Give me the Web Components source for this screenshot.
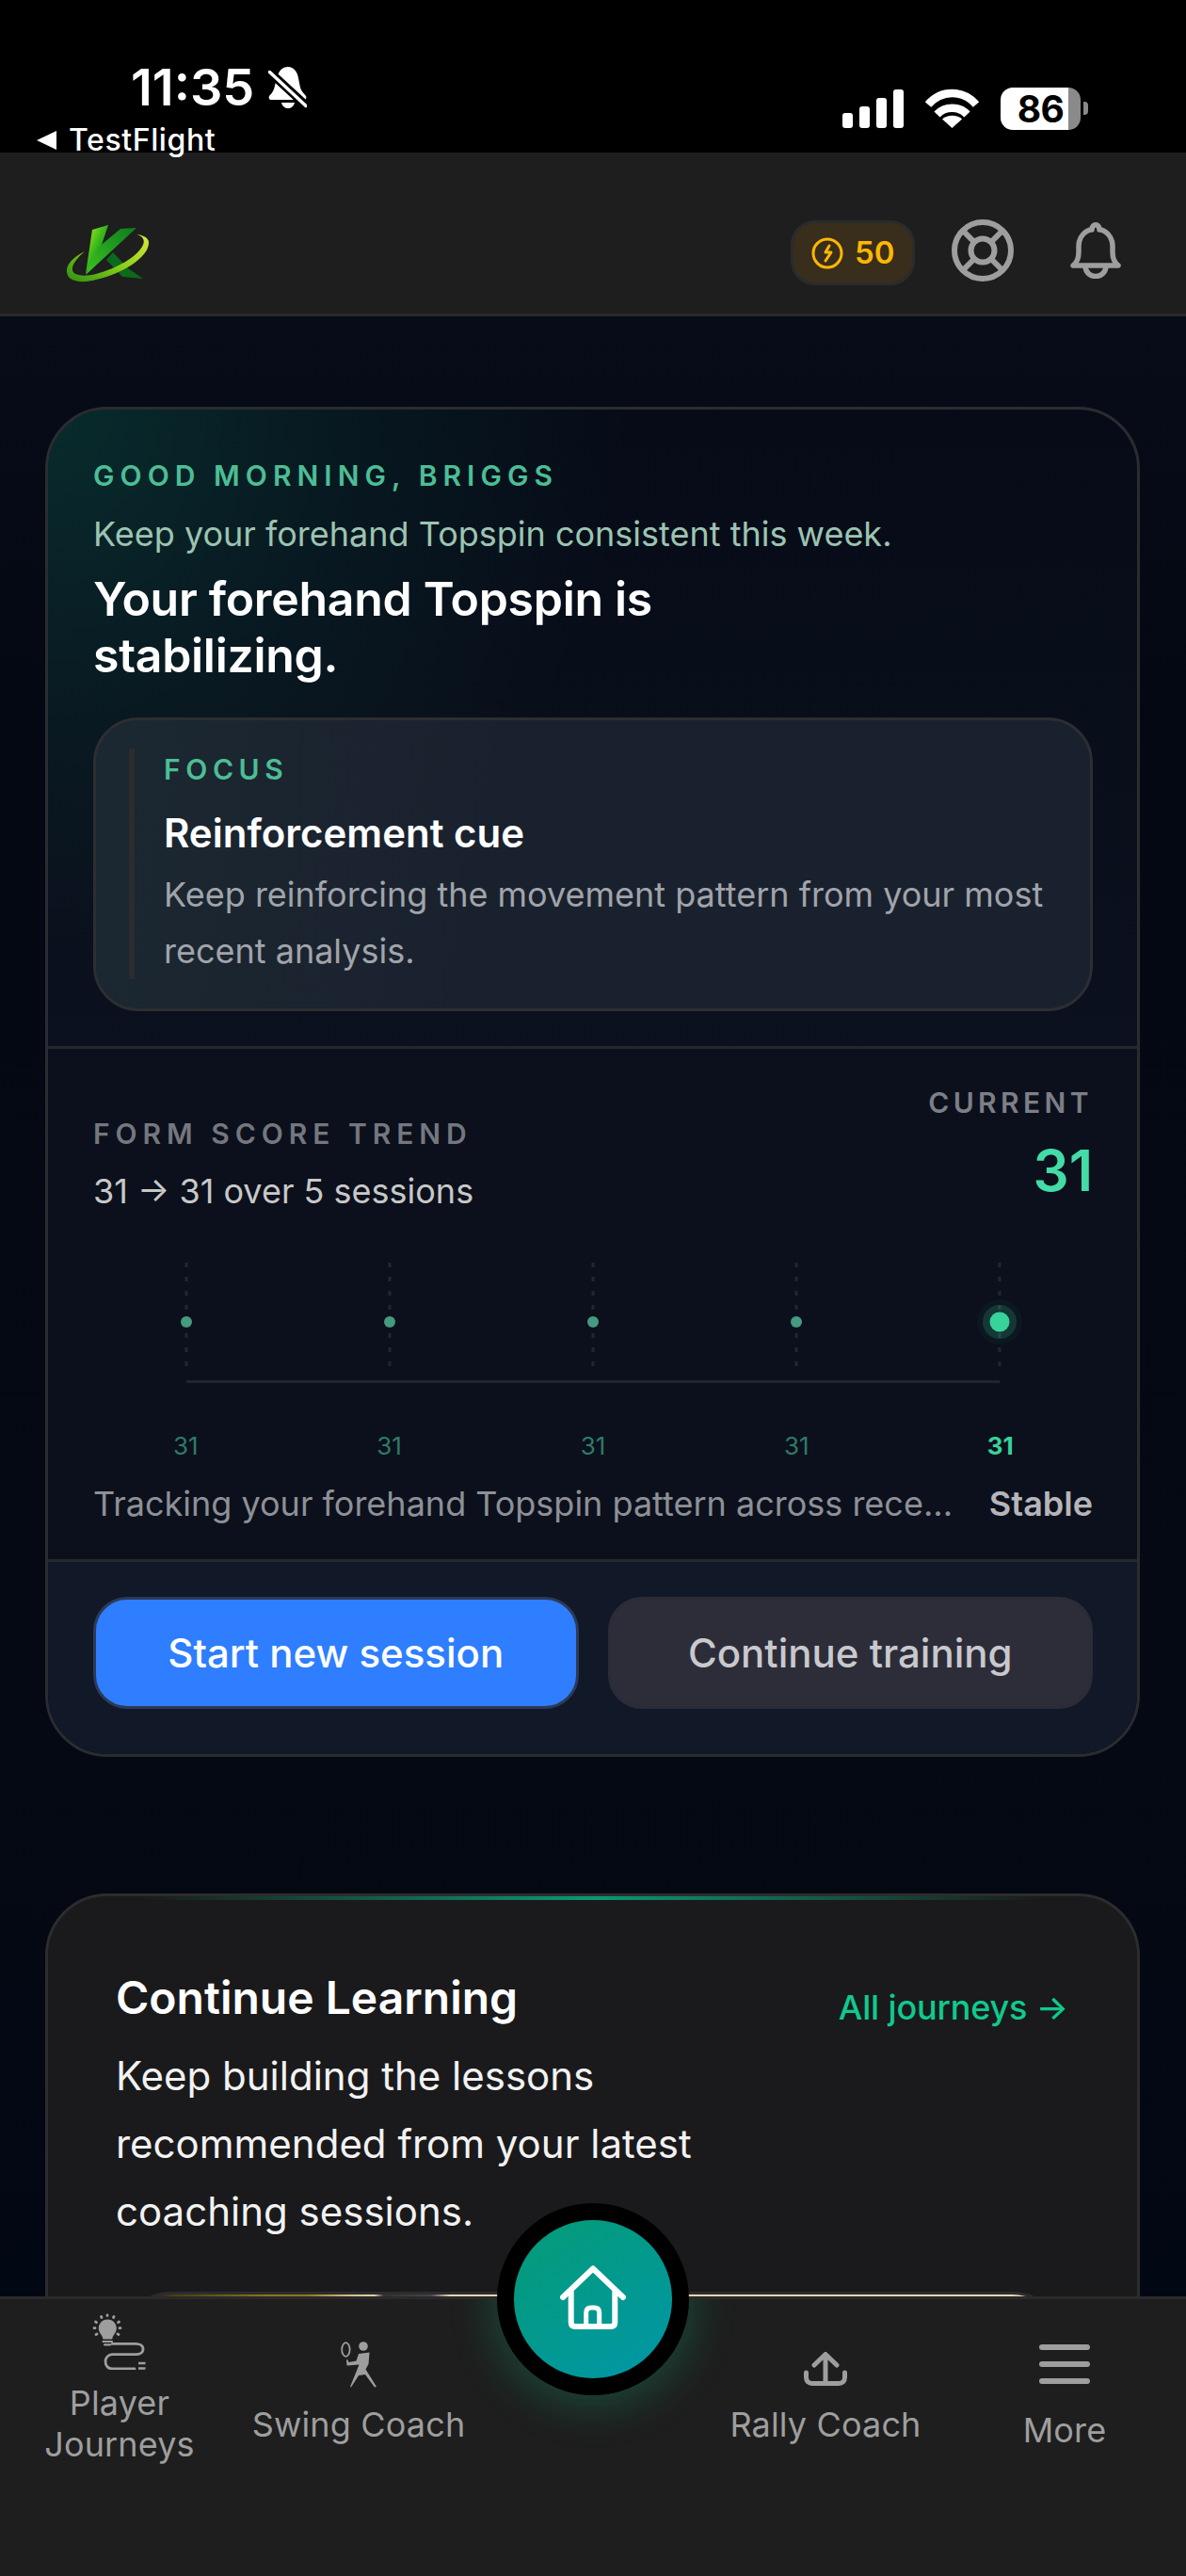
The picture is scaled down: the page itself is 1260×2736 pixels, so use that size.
<!DOCTYPE html>
<html lang="en">
<head>
<meta charset="UTF-8">
<title>Home</title>
<style>
  html, body { margin: 0; background: #050a15; }
  body { font-family: Inter, "Noto Sans", sans-serif; }
  app-shell { height: 2736px; }
</style>
</head>
<body>
<app-shell>
  <status-bar></status-bar>
  <top-header></top-header>
  <main-scroll>
    <hero-card>
      <span slot="eyebrow">GOOD MORNING, BRIGGS</span>
      <span slot="sub">Keep your forehand Topspin consistent this week.</span>
      <span slot="title">Your forehand Topspin is stabilizing.</span>
      <focus-box></focus-box>
      <trend-panel slot="trend"></trend-panel>
    </hero-card>
    <learning-card></learning-card>
  </main-scroll>
  <bottom-nav></bottom-nav>
</app-shell>

<script>
  // 전체 세로 레이아웃
  class AppShell extends HTMLElement {
    constructor() {
      super();
      this.attachShadow({ mode: 'open' }).innerHTML = `
        <style>
          :host { display: flex; flex-direction: column; width: 1260px; overflow: hidden; position: relative; }
        </style>
        <slot></slot>`;
    }
  }

  // 상태 표시줄
  class StatusBar extends HTMLElement {
    constructor() {
      super();
      this.attachShadow({ mode: 'open' }).innerHTML = `
        <style>
          :host { display: flex; justify-content: space-between; height: 162px; flex: none; background: #000; color: #fff; position: relative; z-index: 2; }
          .left { padding: 67px 0 0 38px; }
          .time-row { display: flex; align-items: center; gap: 15px; padding-left: 101px; height: 52px; font: 600 54px/52px Inter, sans-serif; }
          .back { display: flex; align-items: center; gap: 13px; margin-top: 12px; font: 500 32px/36px Inter, sans-serif; letter-spacing: 0.6px; }
          .right { display: flex; align-items: center; gap: 23px; padding: 92px 104px 0 0; height: 46px; }
          .battery { position: relative; width: 85px; height: 45px; border-radius: 13px; background: linear-gradient(90deg, #fff 85%, #8a8a8a 85%); color: #000; font: 700 39px/45px Inter, sans-serif; text-align: center; letter-spacing: -0.5px; }
          .battery::after { content: ""; position: absolute; left: 88px; top: 15px; width: 5px; height: 14px; border-radius: 0 4px 4px 0; background: #8a8a8a; }
          .bat-wrap { width: 93px; }
        </style>
        <div class="left">
          <div class="time-row">
            <span>11:35</span>
            <svg width="41" height="45" viewBox="0 0 41 45" fill="#fff">
              <path d="M21 0c6 0 10 5 11 12l2 10c1 4 4 6 6 9 1 2 0 4-2 4H3c-2 0-3-2-2-4 3-3 5-6 6-11l2-8c2-8 6-12 12-12z"/>
              <path d="M14 38h14c-1 4-4 6-7 6s-6-2-7-6z"/>
              <path d="M1 5 41 42" stroke="#000" stroke-width="9"/>
              <path d="M1.500 5.500 40 41.500" stroke="#fff" stroke-width="3.500" stroke-linecap="round"/>
            </svg>
          </div>
          <div class="back">
            <svg width="22" height="22" viewBox="0 0 22 22" fill="#fff"><path d="M22 1v20L1 11z"/></svg>
            <span>TestFlight</span>
          </div>
        </div>
        <div class="right">
          <svg width="65" height="41" viewBox="0 0 65 41" fill="#fff">
            <rect x="0" y="25" width="11" height="16" rx="3"/>
            <rect x="18" y="18" width="11" height="23" rx="3"/>
            <rect x="36" y="9" width="11" height="32" rx="3"/>
            <rect x="54" y="0" width="11" height="41" rx="3"/>
          </svg>
          <svg width="57" height="42" viewBox="0 0 57 42" fill="none" stroke="#fff" stroke-width="8.500">
            <path d="M3 17C17 1 40 1 54 17"/>
            <path d="M12.500 27.500C21 18.500 36 18.500 44.500 27.500"/>
            <path d="M28.500 42 18 32.500C24 27.500 33 27.500 39 32.500z" fill="#fff" stroke="none"/>
          </svg>
          <div class="bat-wrap"><div class="battery">86</div></div>
        </div>`;
    }
  }

  // 상단 헤더
  class TopHeader extends HTMLElement {
    constructor() {
      super();
      this.attachShadow({ mode: 'open' }).innerHTML = `
        <style>
          :host { display: flex; align-items: center; justify-content: space-between; flex: none; box-sizing: content-box; height: 135px; padding: 36px 69px 0 40px; background: #1e1e1e; border-bottom: 3px solid #2a2a2a; }
          .actions { display: flex; align-items: center; }
          .coins { display: flex; align-items: center; gap: 12px; box-sizing: border-box; width: 132px; height: 69px; margin: 6px 39px 0 0; padding-left: 19px; border: 3px solid #2b2b2b; border-radius: 26px; background: #392d1c; color: #ffb800; font: 600 33px/1 Inter, sans-serif; }
          .bell { margin-left: 60px; }
          svg { display: block; }
        </style>
        <svg width="160" height="110" viewBox="0 0 160 110">
          <defs>
            <linearGradient id="st" x1="0" y1="0" x2="1" y2="1"><stop offset="0" stop-color="#c4e822"/><stop offset=".45" stop-color="#37b81c"/><stop offset="1" stop-color="#0b6a18"/></linearGradient>
            <linearGradient id="ar" x1="1" y1="0" x2="0" y2="1"><stop offset="0" stop-color="#0e7a1e"/><stop offset="1" stop-color="#3cc722"/></linearGradient>
            <linearGradient id="sw" x1="0" y1="1" x2="1" y2="0"><stop offset="0" stop-color="#2d8d12"/><stop offset=".5" stop-color="#8bcf1a"/><stop offset="1" stop-color="#d7e83c"/></linearGradient>
          </defs>
          <path d="M73 65 80 57 96 74 112 85 90 83z" fill="#0c6a1b"/>
          <path d="M58 33 75 28 66 55 51 80z" fill="url(#st)"/>
          <path d="M64 52 88 32 105 31 51 81z" fill="url(#ar)"/>
          <path d="M50 56C38 62 30 70 31 78 32 89 48 90 62 86 90 80 118 62 118 47 118 41 112 39 105 38 112 40 114 44 112 49 106 62 84 74 62 80 50 83 38 82 37 76 36 70 42 63 50 56z" fill="url(#sw)"/>
        </svg>
        <div class="actions">
          <div class="coins">
            <svg width="34" height="34" viewBox="0 0 34 34" fill="none" stroke="#ffb800" stroke-width="3" stroke-linecap="round" stroke-linejoin="round">
              <circle cx="17" cy="17" r="15"/>
              <path d="M19 9 15 16H21L15 25"/>
            </svg>
            <span>50</span>
          </div>
          <svg width="66" height="66" viewBox="0 0 66 66" fill="none" stroke="#9e9e9e" stroke-width="6">
            <circle cx="33" cy="33" r="30"/>
            <circle cx="33" cy="33" r="12.500"/>
            <path d="M12 12 24 24M54 12 42 24M12 54 24 42M54 54 42 42"/>
          </svg>
          <svg class="bell" width="54" height="60" viewBox="0 0 54 60" fill="none" stroke="#9e9e9e" stroke-width="5.500" stroke-linecap="round" stroke-linejoin="round">
            <path d="M3 46C7 43 9 38 9 32V25C9 15 17 8 23 8 23 1 31 1 31 8 37 8 45 15 45 25V32C45 38 47 43 51 46z"/>
            <path d="M16 47C17 61 37 61 38 47"/>
          </svg>
        </div>`;
    }
  }

  // 스크롤 영역
  class MainScroll extends HTMLElement {
    constructor() {
      super();
      this.attachShadow({ mode: 'open' }).innerHTML = `
        <style>
          :host { display: flex; flex-direction: column; gap: 145px; flex: none; height: 2103px; overflow: hidden; box-sizing: border-box; padding: 96px 49px 0 48px; background: linear-gradient(180deg, #070c18 0, #040813 400px, #050913 1500px, #020714 100%); }
        </style>
        <slot></slot>`;
    }
  }

  class HeroCard extends HTMLElement {
    constructor() {
      super();
      this.attachShadow({ mode: 'open' }).innerHTML = `
        <style>
          :host { display: block; flex: none; border: 3px solid #2b2c30; border-radius: 66px; overflow: hidden; background: linear-gradient(180deg, #060b17, #0b111e 50%); color: #fff; position: relative; }
          .top { padding: 50px 47px 37px 48px; background: radial-gradient(ellipse 620px 600px at 0 0, rgba(16, 160, 120, .22), rgba(16, 160, 120, .08) 55%, transparent 100%); }
          .eyebrow { font: 600 30px/40px Inter, sans-serif; letter-spacing: 6.050px; color: #4dbd96; }
          .sub { margin-top: 14px; font: 400 36px/56px Inter, sans-serif; color: #9cc4b2; }
          .title { width: 640px; margin-top: 11px; margin-bottom: 36px; font: 600 50px/60px Inter, sans-serif; letter-spacing: -0.3px; }
          .foot { display: grid; grid-template-columns: 1fr 1fr; gap: 31px; padding: 37px 47px 48px 48px; border-top: 3px solid #262830; background: #111827; }
          .btn { box-sizing: border-box; height: 119px; display: flex; align-items: center; justify-content: center; border-radius: 36px; font: 500 42px/1 Inter, sans-serif; }
          .primary { background: #2e7eff; border: 3px solid #2b3a58; color: #fff; }
          .second { background: #2d2d3a; border: 3px solid #2c2c36; color: #c9c9cd; }
        </style>
        <div class="top">
          <div class="eyebrow"><slot name="eyebrow"></slot></div>
          <div class="sub"><slot name="sub"></slot></div>
          <div class="title"><slot name="title"></slot></div>
          <slot></slot>
        </div>
        <slot name="trend"></slot>
        <div class="foot">
          <div class="btn primary">Start new session</div>
          <div class="btn second">Continue training</div>
        </div>`;
    }
  }

  class FocusBox extends HTMLElement {
    constructor() {
      super();
      this.attachShadow({ mode: 'open' }).innerHTML = `
        <style>
          :host { display: block; border: 3px solid #2d2e31; border-radius: 48px; padding: 30px 28px 31px 35px; background: linear-gradient(100deg, #1b2831, #1a212e 40%); }
          .inner { box-sizing: border-box; height: 245px; padding: 2px 0 0 31px; border-left: 6px solid #2b2c2e; }
          .label { font: 600 30px/40px Inter, sans-serif; letter-spacing: 5.600px; color: #4dbd96; }
          .name { margin-top: 20px; font: 600 42px/56px Inter, sans-serif; color: #fff; }
          .desc { margin-top: 7px; font: 400 36px/60px Inter, sans-serif; color: #a1a4aa; }
        </style>
        <div class="inner">
          <div class="label">FOCUS</div>
          <div class="name">Reinforcement cue</div>
          <div class="desc">Keep reinforcing the movement pattern from your most recent analysis.</div>
        </div>`;
    }
  }

  class TrendPanel extends HTMLElement {
    constructor() {
      super();
      const xs = [108, 324, 540, 756, 972];
      const lines = xs.map(x => `<path d="M${x} 11V124" stroke="#222632" stroke-width="3" stroke-dasharray="5 10"/>`).join('');
      const dots = xs.slice(0, 4).map(x => `<circle cx="${x}" cy="74" r="6" fill="#459a80"/>`).join('');
      const labels = [0, 1, 2, 3, 4].map(i => `<span class="${i === 4 ? 'now' : ''}">31</span>`).join('');
      this.attachShadow({ mode: 'open' }).innerHTML = `
        <style>
          :host { display: block; padding: 37px 47px 34px 48px; border-top: 3px solid #262830; background: #0b101c; }
          .head { display: flex; justify-content: space-between; align-items: flex-end; }
          .label { font: 600 30px/40px Inter, sans-serif; letter-spacing: 5.950px; color: #75777e; }
          .cap { color: #7d7f86; letter-spacing: 4.400px; }
          .range { margin-top: 16px; font: 400 36px/50px Inter, sans-serif; color: #c8c8c8; }
          .cur { text-align: right; padding-bottom: 12px; }
          .big { margin-top: 17px; font: 600 60px/70px Inter, sans-serif; color: #44dba6; }
          .chart { margin: 40px -11px 0 -9px; }
          svg { display: block; }
          .vals { display: grid; grid-template-columns: repeat(5, 1fr); margin: 36px -10px 0; text-align: center; font: 400 26px/40px Inter, sans-serif; color: #2f7a66; }
          .now { font-weight: 700; color: #37d39b; }
          .note { display: flex; justify-content: space-between; margin-top: 16px; font: 400 36px/50px Inter, sans-serif; color: #8e9096; white-space: nowrap; }
          .state { font-weight: 600; color: #b5b5b9; }
        </style>
        <div class="head">
          <div>
            <div class="label">FORM SCORE TREND</div>
            <div class="range">31 → 31 over 5 sessions</div>
          </div>
          <div class="cur">
            <div class="label cap">CURRENT</div>
            <div class="big">31</div>
          </div>
        </div>
        <div class="chart">
          <svg width="1080" height="150" viewBox="0 0 1080 150">
            ${lines}
            <path d="M108 137.500H972" stroke="#20242f" stroke-width="3"/>
            ${dots}
            <circle cx="972" cy="74" r="24" fill="#37d39b" opacity=".04"/>
            <circle cx="972" cy="74" r="18" fill="#37d39b" opacity=".18"/>
            <circle cx="972" cy="74" r="10.500" fill="#37d39b"/>
          </svg>
        </div>
        <div class="vals">${labels}</div>
        <div class="note"><span>Tracking your forehand Topspin pattern across rece...</span><span class="state">Stable</span></div>`;
    }
  }

  class LearningCard extends HTMLElement {
    constructor() {
      super();
      this.attachShadow({ mode: 'open' }).innerHTML = `
        <style>
          :host { display: block; flex: none; position: relative; border: 3px solid #2c2c2e; border-radius: 66px; padding: 77px 73px 60px 72px; background: #1a1a1c; color: #fff; }
          .line { position: absolute; left: 100px; right: 100px; top: 0; height: 4px; background: linear-gradient(90deg, transparent, #0a9a70 50%, transparent); }
          .head { display: flex; justify-content: space-between; align-items: flex-start; }
          h2 { margin: 1px 0 0; font: 600 48px/60px Inter, sans-serif; }
          .all { padding-top: 16px; font: 500 36px/50px Inter, sans-serif; color: #10c98e; letter-spacing: -0.15px; }
          p { width: 660px; margin: 12px 0 49px; font: 400 42px/72px Inter, sans-serif; color: #f2f2f2; }
          .thumb { border: 3px solid #2c2c2e; border-radius: 60px; height: 300px; overflow: hidden; background: #e8d5b0; }
          .photo { height: 100%; background: linear-gradient(90deg, #3a3410 4%, #8b7a1c 16%, #8b7a1c 20%, #cdbb84 24%, #e2cfa8 27%, #37302e 28%, #46424c 33%, #e8d5b0 35%); }
        </style>
        <div class="line"></div>
        <div class="head">
          <h2>Continue Learning</h2>
          <span class="all">All journeys →</span>
        </div>
        <p>Keep building the lessons recommended from your latest coaching sessions.</p>
        <div class="thumb"><div class="photo"></div></div>`;
    }
  }

  class NavItem extends HTMLElement {
    constructor() {
      super();
      this.attachShadow({ mode: 'open' }).innerHTML = `
        <style>
          :host { display: flex; flex-direction: column; align-items: center; padding-top: var(--top, 40px); gap: var(--gap, 16px); text-align: center; font: 400 36px/44px Inter, sans-serif; letter-spacing: 0.15px; color: #9e9e9e; }
        </style>
        <slot name="icon"></slot>
        <slot></slot>`;
    }
  }

  class BottomNav extends HTMLElement {
    constructor() {
      super();
      this.attachShadow({ mode: 'open' }).innerHTML = `
        <style>
          :host { display: grid; grid-template-columns: 254px 254px 244px 250px 258px; flex: none; height: 294px; position: relative; background: #1e1e1e; border-top: 3px solid #2a2a2a; }
          .clip { position: absolute; inset: 0; overflow: hidden; }
          .glow { position: absolute; left: 528px; top: -102px; width: 204px; height: 204px; border-radius: 50%; box-shadow: 0 6px 44px 6px rgba(16, 185, 129, .26); }
          .home { position: absolute; left: 528px; top: -102px; box-sizing: border-box; width: 204px; height: 204px; display: flex; align-items: center; justify-content: center; border: 18px solid #000; border-radius: 50%; background: linear-gradient(145deg, #059c70, #0096ad); background-origin: border-box; }
          svg { display: block; }
          .dark { stroke: none; fill: #9e9e9e; }
        </style>
        <div class="clip"><div class="glow"></div></div>
        <nav-item style="--top: 15px; --gap: 13px">
          <svg slot="icon" width="58" height="60" viewBox="0 0 58 60" fill="none" stroke="#9e9e9e" stroke-linecap="round">
            <path class="dark" d="M16.300 6.500c5.500 0 9.500 4.200 9.500 9.500 0 3.500-2 5.500-3.500 8-.8 1.400-1 2.500-1 3.500h-10c0-1-.2-2.100-1-3.500-1.500-2.500-3.500-4.500-3.500-8 0-5.300 4-9.500 9.500-9.500z"/>
            <path d="M11.500 30H21M13 33.300H19.500" stroke-width="2.200"/>
            <path d="M16 2V2.500M9.500 3.500 10 4.500M23 3.500 22.500 4.500M3.500 9 4.500 9.700M28.500 9 27.500 9.700M2 15.700H3M29 15.700H30M4 22.500 5 22M28 22.500 27 22" stroke-width="2.800"/>
            <path d="M21.300 32.300H46.300C50 32.300 54 34 54 38S50 43.700 46.300 43.700H21.300C17 43.700 14 47 14 51.300S17 59 21.300 59H45" stroke-width="2.800"/>
            <path d="M49 53H56.500M49 58.500H56.500" stroke-width="2.500" stroke-linecap="butt"/>
          </svg>
          <span>Player<br>Journeys</span>
        </nav-item>
        <nav-item style="--top: 45px; --gap: 17px">
          <svg slot="icon" width="38" height="49" viewBox="0 0 38 49">
            <ellipse cx="5.400" cy="8.500" rx="4.200" ry="7.300" fill="none" stroke="#9e9e9e" stroke-width="1.800"/>
            <circle cx="24" cy="5" r="4.800" fill="#9e9e9e"/>
            <path fill="#9e9e9e" d="M19 13 30.500 11.500 29.500 24 26.500 29.500 38 48 36 48.500 26 35 19 36 11 48.500 10 48 16.500 32 19.500 24.500 6.500 25.500 6 20 7 18.500 8.500 22 16.500 20.500z"/>
          </svg>
          <span>Swing Coach</span>
        </nav-item>
        <span></span>
        <nav-item style="--top: 56px; --gap: 19px">
          <svg slot="icon" width="46" height="36" viewBox="0 0 46 36" fill="none" stroke="#9e9e9e" stroke-width="5" stroke-linecap="round" stroke-linejoin="round">
            <path d="M23 3V34M11 14 23 2.500 35 14"/>
            <path d="M2.500 22V27C2.500 31 5 33.500 9 33.500H37C41 33.500 43.500 31 43.500 27V22"/>
          </svg>
          <span>Rally Coach</span>
        </nav-item>
        <nav-item style="--top: 48px; --gap: 27px">
          <svg slot="icon" width="54" height="42" viewBox="0 0 54 42" fill="none" stroke="#9e9e9e" stroke-width="6" stroke-linecap="round">
            <path d="M3 3H51M3 21H51M3 39H51"/>
          </svg>
          <span>More</span>
        </nav-item>
        <div class="home">
          <svg width="72" height="72" viewBox="0 0 72 72" fill="none" stroke="#fff" stroke-width="6" stroke-linecap="round" stroke-linejoin="round">
            <path d="M4 34 36 3.500 68 34"/>
            <path d="M12.700 28V60.500C12.700 63.500 14.200 65 17.200 65H54.800C57.800 65 59.300 63.500 59.300 60.500V28"/>
            <path d="M28.700 65V50.500C28.700 47 30.500 45 34 45H37.400C40.900 45 42.700 47 42.700 50.500V65" stroke-width="5"/>
          </svg>
        </div>`;
    }
  }

  customElements.define('app-shell', AppShell);
  customElements.define('status-bar', StatusBar);
  customElements.define('top-header', TopHeader);
  customElements.define('main-scroll', MainScroll);
  customElements.define('hero-card', HeroCard);
  customElements.define('focus-box', FocusBox);
  customElements.define('trend-panel', TrendPanel);
  customElements.define('learning-card', LearningCard);
  customElements.define('nav-item', NavItem);
  customElements.define('bottom-nav', BottomNav);
</script>
</body>
</html>
